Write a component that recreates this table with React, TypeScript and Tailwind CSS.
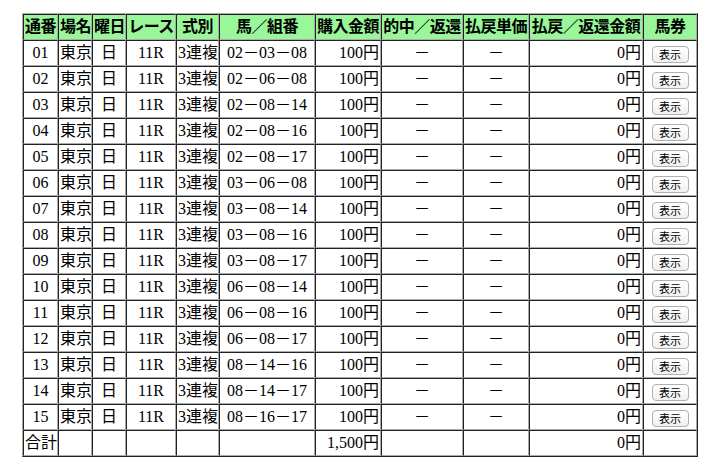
const rows = [
  '02－03－08',
  '02－06－08',
  '02－08－14',
  '02－08－16',
  '02－08－17',
  '03－06－08',
  '03－08－14',
  '03－08－16',
  '03－08－17',
  '06－08－14',
  '06－08－16',
  '06－08－17',
  '08－14－16',
  '08－14－17',
  '08－16－17',
];

const heads: [string, string][] = [
  ['通番', 'w-[35px]'],
  ['場名', 'w-[34px]'],
  ['曜日', 'w-[34px]'],
  ['レース', 'w-[50px]'],
  ['式別', 'w-[43px]'],
  ['馬／組番', 'w-[96px]'],
  ['購入金額', 'w-[66px]'],
  ['的中／返還', 'w-[82px]'],
  ['払戻単価', 'w-[66px]'],
  ['払戻／返還金額', 'w-[114px]'],
  ['馬券', 'w-[54px]'],
];

const cell = 'h-[26px] p-[1px] border border-t-[#222] border-l-[#222] border-b-[#aaa] border-r-[#aaa] leading-[22px] whitespace-nowrap overflow-hidden';

export default function App() {
  return (
    <div className="min-h-[471px] bg-white pt-[13px] pl-[22px] text-[16px] text-black [font-family:'Liberation_Serif','Noto_Sans_CJK_JP',serif]">
      <table className="w-[676px] table-fixed border-separate border-spacing-0 border border-t-[#aaa] border-l-[#aaa] border-b-[#222] border-r-[#222]">
        <thead>
          <tr className="bg-[#99f799]">
            {heads.map(([h, w]) => (
              <th key={h} className={`${cell} ${w} text-center font-bold tracking-[-0.5px]`}>
                {h}
              </th>
            ))}
          </tr>
        </thead>
        <tbody>
          {rows.map((kumi, i) => (
            <tr key={kumi}>
              <td className={`${cell} text-center`}>{String(i + 1).padStart(2, '0')}</td>
              <td className={`${cell} text-left`}>東京</td>
              <td className={`${cell} text-center`}>日</td>
              <td className={`${cell} text-center`}>11R</td>
              <td className={`${cell} text-left`}>3連複</td>
              <td className={`${cell} text-center`}>{kumi}</td>
              <td className={`${cell} text-right`}>100円</td>
              <td className={`${cell} text-center`}>－</td>
              <td className={`${cell} text-center`}>－</td>
              <td className={`${cell} text-right`}>0円</td>
              <td className={`${cell} text-center`}>
                <button className="inline-flex h-[17px] w-[37px] items-center justify-center rounded-[4px] border border-[#b0b0b0] bg-gradient-to-b from-white to-[#f0f0f0] align-middle text-[11px] leading-none text-black [font-family:'Noto_Sans_CJK_JP',sans-serif]">
                  表示
                </button>
              </td>
            </tr>
          ))}
          <tr>
            <td className={`${cell} text-left`}>合計</td>
            <td className={cell}></td>
            <td className={cell}></td>
            <td className={cell}></td>
            <td className={cell}></td>
            <td className={cell}></td>
            <td className={`${cell} text-right`}>1,500円</td>
            <td className={cell}></td>
            <td className={cell}></td>
            <td className={`${cell} text-right`}>0円</td>
            <td className={cell}></td>
          </tr>
        </tbody>
      </table>
    </div>
  );
}
